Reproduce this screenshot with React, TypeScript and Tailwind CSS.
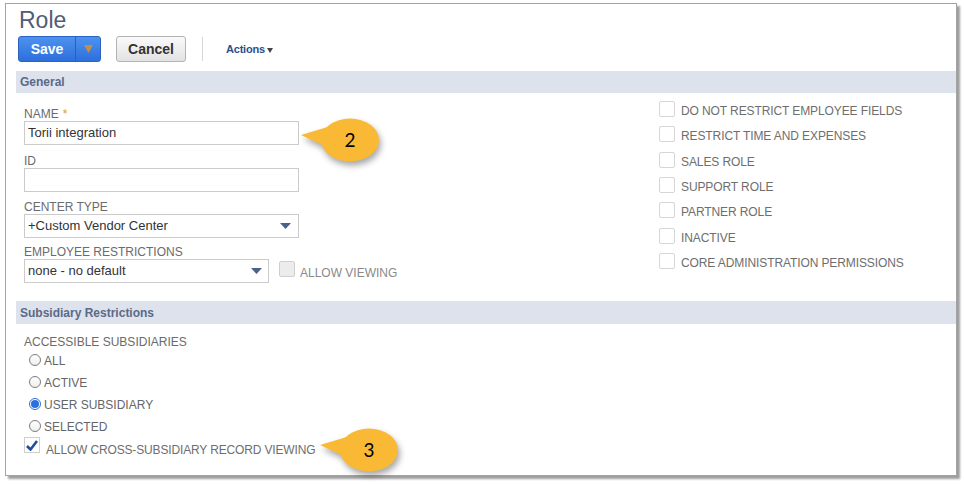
import React from 'react';

const font = { fontFamily: '"Liberation Sans", Arial, sans-serif' };

function FieldLabel({ text, required }: { text: string; required?: boolean }) {
  return (
    <div className="h-[14px] text-[12px] leading-[14px] text-[#6b6b6b]">
      {text}
      {required && <span className="ml-[4px] text-[#e39a2b]">*</span>}
    </div>
  );
}

function DownArrow() {
  return (
    <svg width="11" height="6" viewBox="0 0 11 6" className="shrink-0">
      <path d="M0 0 H11 L5.5 6 Z" fill="#4b6187" />
    </svg>
  );
}

function Box({ disabled }: { disabled?: boolean }) {
  return (
    <div
      className={`w-[16px] h-[16px] shrink-0 border rounded-[2px] ${
        disabled ? 'bg-[#ececec] border-[#cfcfcf]' : 'bg-white border-[#d6d6d6]'
      }`}
    />
  );
}

function Radio({ label, checked }: { label: string; checked?: boolean }) {
  return (
    <div className="h-[22px] flex items-center pl-[5px]">
      {checked ? (
        <div className="w-[12px] h-[12px] rounded-full border border-[#2f6fd8] bg-white flex items-center justify-center">
          <div className="w-[8px] h-[8px] rounded-full bg-[#2b6fe0]" />
        </div>
      ) : (
        <div className="w-[12px] h-[12px] rounded-full border border-[#7d7d7d] bg-gradient-to-b from-white to-[#eeeeee]" />
      )}
      <span className="ml-[3px] text-[12px] leading-[14px] mt-[2px] text-[#666]">{label}</span>
    </div>
  );
}

function Callout({ n, left, top }: { n: string; left: number; top: number }) {
  // absolute overlay: callout bubble with its tail pointing left
  return (
    <div className="absolute pointer-events-none" style={{ left, top }}>
      <svg width="86" height="52" viewBox="0 0 86 52" className="drop-shadow-[2px_4px_3px_rgba(0,0,0,0.35)]">
        <path d="M0 17 L30 8 L28 30 Z" fill="#f9b934" />
        <ellipse cx="49" cy="22" rx="29" ry="21.5" fill="#f9b934" />
      </svg>
      <span
        className="absolute left-[20px] top-[0px] w-[58px] h-[44px] flex items-center justify-center text-[19px] text-black"
        style={{ fontFamily: 'Lato, "Open Sans", sans-serif' }}
      >
        {n}
      </span>
    </div>
  );
}

const flags = [
  'DO NOT RESTRICT EMPLOYEE FIELDS',
  'RESTRICT TIME AND EXPENSES',
  'SALES ROLE',
  'SUPPORT ROLE',
  'PARTNER ROLE',
  'INACTIVE',
  'CORE ADMINISTRATION PERMISSIONS',
];

export default function App() {
  return (
    <div className="relative w-[964px] h-[484px] bg-white overflow-hidden" style={font}>
      <div className="ml-[5px] pt-[3px]">
        <div className="w-[952px] h-[473px] border border-[#a3a3a3] bg-white shadow-[3px_3px_2px_rgba(0,0,0,0.38)] flex flex-col">
          {/* title */}
          <div className="h-[32px] pl-[13px] text-[23px] leading-[32px] text-[#4f5d77]">Role</div>

          {/* buttons */}
          <div className="h-[26px] flex items-center pl-[12px]">
            <div className="w-[83px] h-[26px] flex rounded-[3px] border border-[#2a62c4] bg-gradient-to-b from-[#4d92ee] to-[#2d6fdc] overflow-hidden">
              <div className="w-[56px] flex items-center justify-center text-white font-bold text-[14px]">Save</div>
              <div className="flex-1 border-l border-[#2a5fbf] flex items-center justify-center">
                <svg width="9" height="8" viewBox="0 0 9 8">
                  <path d="M0 0 H9 L4.5 8 Z" fill="#c0904a" />
                </svg>
              </div>
            </div>
            <div className="ml-[15px] w-[70px] h-[26px] rounded-[3px] border border-[#b3b3b3] bg-gradient-to-b from-[#fafafa] to-[#e2e2e2] flex items-center justify-center text-[14px] font-bold text-[#333]">
              Cancel
            </div>
            <div className="ml-[16px] w-px h-[24px] bg-[#d6d6d6]" />
            <div className="ml-[23px] flex items-center text-[11px] font-bold text-[#2b4f8e] tracking-[-0.2px]">
              Actions
              <svg width="6" height="5" viewBox="0 0 6 5" className="ml-[2px] mt-[2px]">
                <path d="M0 0 H6 L3 5 Z" fill="#444" />
              </svg>
            </div>
          </div>

          {/* General */}
          <div className="mt-[9px] ml-[10px] h-[22px] bg-[#dde2ec] pl-[4px] flex items-center text-[12px] font-bold text-[#5a6a87]">
            General
          </div>

          <div className="h-[208px] flex">
            <div className="w-[653px] pl-[18px] pt-[14px]">
              <FieldLabel text="NAME" required />
              <div className="w-[275px] h-[24px] border border-[#cbcbcb] flex items-center pl-[3px] text-[13px] text-[#333]">
                Torii integration
              </div>

              <div className="mt-[9px]">
                <FieldLabel text="ID" />
                <div className="w-[275px] h-[24px] border border-[#cbcbcb]" />
              </div>

              <div className="mt-[8px]">
                <FieldLabel text="CENTER TYPE" />
                <div className="w-[275px] h-[24px] border border-[#cbcbcb] flex items-center justify-between pl-[3px] pr-[7px] text-[13px] text-[#333]">
                  +Custom Vendor Center
                  <DownArrow />
                </div>
              </div>

              <div className="mt-[7px]">
                <FieldLabel text="EMPLOYEE RESTRICTIONS" />
                <div className="flex items-start">
                  <div className="w-[245px] h-[24px] border border-[#cbcbcb] flex items-center justify-between pl-[3px] pr-[6px] text-[13px] text-[#333]">
                    none - no default
                    <DownArrow />
                  </div>
                  <div className="ml-[10px] mt-[2px]">
                    <Box disabled />
                  </div>
                  <span className="ml-[5px] mt-[6px] text-[12px] leading-[16px] text-[#8a8a8a]">ALLOW VIEWING</span>
                </div>
              </div>
            </div>

            <div className="flex-1 pt-[8px]">
              {flags.map((f) => (
                <div key={f} className="h-[25.33px] flex items-start">
                  <Box />
                  <span className="ml-[6px] mt-[2px] text-[12px] leading-[16px] text-[#6e6e6e] tracking-[-0.1px]">{f}</span>
                </div>
              ))}
            </div>
          </div>

          {/* Subsidiary */}
          <div className="ml-[10px] h-[23px] bg-[#dde2ec] pl-[4px] flex items-center text-[12px] font-bold text-[#5a6a87]">
            Subsidiary Restrictions
          </div>

          <div className="pl-[18px] pt-[11px]">
            <FieldLabel text="ACCESSIBLE SUBSIDIARIES" />
            <Radio label="ALL" />
            <Radio label="ACTIVE" />
            <Radio label="USER SUBSIDIARY" checked />
            <Radio label="SELECTED" />
            <div className="flex items-start">
              <div className="w-[16px] h-[16px] border border-[#cfcfcf] bg-white flex items-center justify-center">
                <svg width="12" height="11" viewBox="0 0 12 11">
                  <path d="M1 6 L4.5 9.5 L11 1" fill="none" stroke="#1f4f98" strokeWidth="2.6" />
                </svg>
              </div>
              <span className="ml-[6px] mt-[5px] text-[12px] leading-[16px] text-[#6e6e6e] tracking-[-0.15px]">
                ALLOW CROSS-SUBSIDIARY RECORD VIEWING
              </span>
            </div>
          </div>
        </div>
      </div>

      <Callout n="2" left={301} top={118} />
      <Callout n="3" left={320} top={428} />
    </div>
  );
}
